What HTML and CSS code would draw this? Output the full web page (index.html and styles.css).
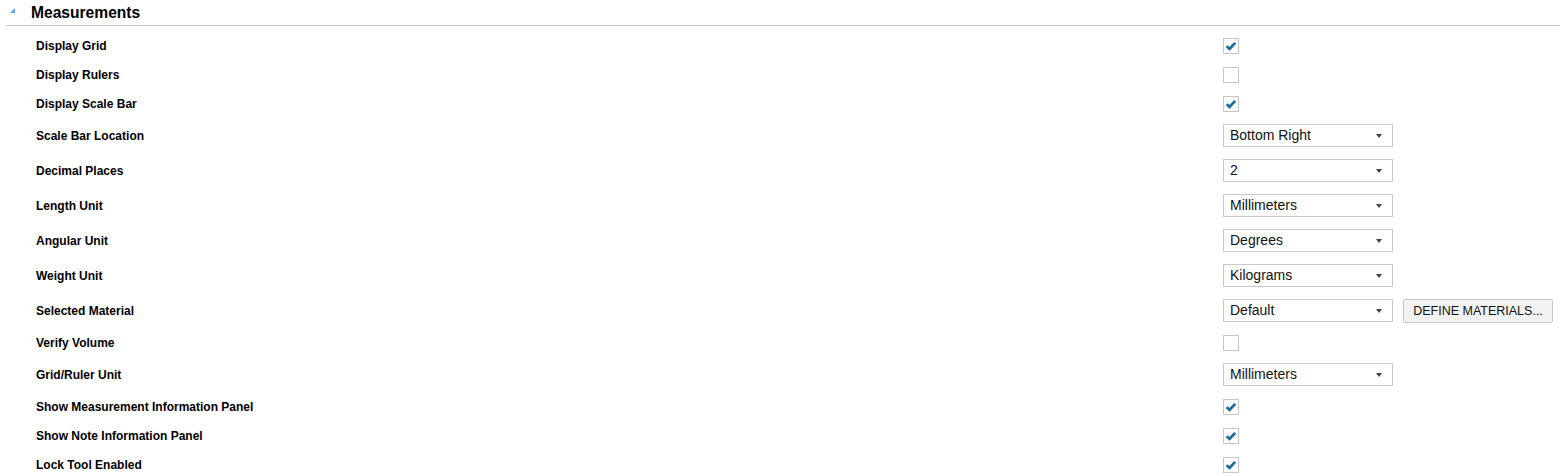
FILE: index.html
```html
<!DOCTYPE html>
<html lang="en">

<head>
    <meta charset="UTF-8">
    <meta name="viewport" content="width=device-width, initial-scale=1.0">
    <title>Measurements</title>
    <link rel="stylesheet" href="styles.css">
</head>

<body>
    <div class="section-header">
        <svg class="expander" width="6" height="6" viewBox="0 0 6 6"><polygon points="5,0 5,5 0,5" fill="#5aa6dc"/></svg>
        <span class="section-title">Measurements</span>
    </div>

    <div class="settings">
        <div class="row check-row">
            <span class="label">Display Grid</span>
            <span class="checkbox checked"><svg viewBox="0 0 16 16"><path d="M3 8.2 L6.4 11.2 L12.8 4.4" /></svg></span>
        </div>
        <div class="row check-row">
            <span class="label">Display Rulers</span>
            <span class="checkbox"></span>
        </div>
        <div class="row check-row">
            <span class="label">Display Scale Bar</span>
            <span class="checkbox checked"><svg viewBox="0 0 16 16"><path d="M3 8.2 L6.4 11.2 L12.8 4.4" /></svg></span>
        </div>
        <div class="row select-row">
            <span class="label">Scale Bar Location</span>
            <div class="control"><span class="dropdown">Bottom Right<i class="arrow"></i></span></div>
        </div>
        <div class="row select-row">
            <span class="label">Decimal Places</span>
            <div class="control"><span class="dropdown">2<i class="arrow"></i></span></div>
        </div>
        <div class="row select-row">
            <span class="label">Length Unit</span>
            <div class="control"><span class="dropdown">Millimeters<i class="arrow"></i></span></div>
        </div>
        <div class="row select-row">
            <span class="label">Angular Unit</span>
            <div class="control"><span class="dropdown">Degrees<i class="arrow"></i></span></div>
        </div>
        <div class="row select-row">
            <span class="label">Weight Unit</span>
            <div class="control"><span class="dropdown">Kilograms<i class="arrow"></i></span></div>
        </div>
        <div class="row select-row">
            <span class="label">Selected Material</span>
            <div class="control">
                <span class="dropdown">Default<i class="arrow"></i></span>
                <button class="btn">DEFINE MATERIALS...</button>
            </div>
        </div>
        <div class="row check-row">
            <span class="label">Verify Volume</span>
            <span class="checkbox"></span>
        </div>
        <div class="row select-row">
            <span class="label">Grid/Ruler Unit</span>
            <div class="control"><span class="dropdown">Millimeters<i class="arrow"></i></span></div>
        </div>
        <div class="row check-row">
            <span class="label">Show Measurement Information Panel</span>
            <span class="checkbox checked"><svg viewBox="0 0 16 16"><path d="M3 8.2 L6.4 11.2 L12.8 4.4" /></svg></span>
        </div>
        <div class="row check-row">
            <span class="label">Show Note Information Panel</span>
            <span class="checkbox checked"><svg viewBox="0 0 16 16"><path d="M3 8.2 L6.4 11.2 L12.8 4.4" /></svg></span>
        </div>
        <div class="row check-row">
            <span class="label">Lock Tool Enabled</span>
            <span class="checkbox checked"><svg viewBox="0 0 16 16"><path d="M3 8.2 L6.4 11.2 L12.8 4.4" /></svg></span>
        </div>
    </div>
</body>

</html>
```

FILE: styles.css
```css
body {
    margin: 0;
    font-family: "Liberation Sans", Arial, sans-serif;
    color: #000;
    background: #fff;
}

.section-header {
    display: flex;
    align-items: center;
    height: 25px;
    margin-left: 6px;
    border-bottom: 1px solid #c4c4c4;
}

.expander {
    margin-left: 4px;
    margin-right: 15px;
    margin-top: -4px;
}

.section-title {
    font-size: 15.6px;
    font-weight: bold;
}

.settings {
    padding-top: 5px;
}

.row {
    display: grid;
    grid-template-columns: 1187px auto;
    align-items: center;
    padding-left: 36px;
}

.check-row {
    height: 29px;
}

.select-row {
    height: 35px;
}

.label {
    font-size: 12px;
    font-weight: bold;
}

.checkbox {
    width: 14px;
    height: 14px;
    border: 1px solid #c6c6c6;
    background: #fff;
}

.checkbox svg {
    display: block;
    width: 14px;
    height: 14px;
}

.checkbox path {
    fill: none;
    stroke: #1d6d9c;
    stroke-width: 3.2;
}

.control {
    display: flex;
    align-items: center;
    gap: 10px;
}

.dropdown {
    position: relative;
    box-sizing: border-box;
    width: 170px;
    height: 23px;
    line-height: 21px;
    padding-left: 6px;
    border: 1px solid #c8c8c8;
    font-size: 14px;
    color: #111;
}

.arrow {
    position: absolute;
    right: 10px;
    top: 9px;
    border-left: 3px solid transparent;
    border-right: 3px solid transparent;
    border-top: 4px solid #444;
}

.btn {
    box-sizing: border-box;
    width: 150px;
    height: 24px;
    padding: 0;
    font-family: "Liberation Sans", Arial, sans-serif;
    font-size: 12.5px;
    color: #111;
    background: #f2f2f2;
    border: 1px solid #c8c8c8;
    border-radius: 2px;
}
```
